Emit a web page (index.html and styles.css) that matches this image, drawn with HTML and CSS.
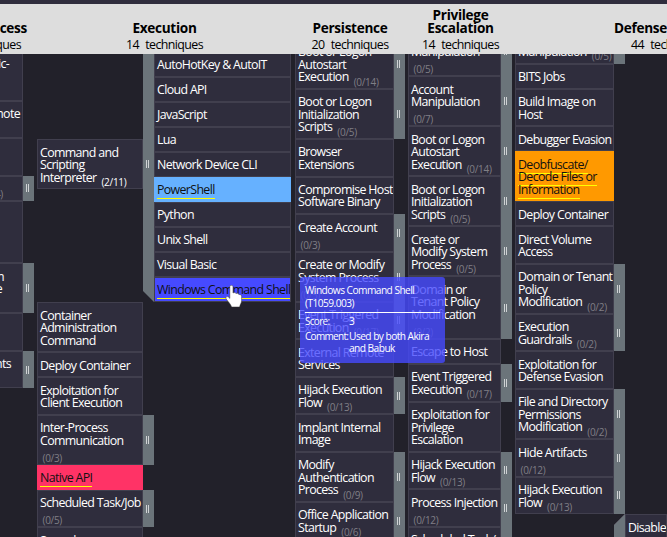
FILE: index.html
```html
<!DOCTYPE html>
<html lang="en">
<head>
<meta charset="utf-8">
<title>Technique matrix</title>
<link rel="stylesheet" href="styles.css">
</head>
<body>
<header class="head">
  <div class="tactic initial"><b>Initial Access</b><span>10&nbsp; techniques</span></div>
  <div class="tactic execution"><b>Execution</b><span>14&nbsp; techniques</span></div>
  <div class="tactic persistence"><b>Persistence</b><span>20&nbsp; techniques</span></div>
  <div class="tactic privilege"><b>Privilege<br>Escalation</b><span>14&nbsp; techniques</span></div>
  <div class="tactic evasion"><b>Defense Evasion</b><span>44&nbsp; techniques</span></div>
</header>
<main class="matrix">
  <section class="col initial">
    <div class="row"><div class="tech n3 c-public">Exploit Public-<br>&nbsp;<br>&nbsp;</div></div>
    <div class="row"><div class="tech n2 c-remote">External Remote<br>&nbsp;</div></div>
    <div class="row"><div class="tech n2">&nbsp;</div></div>
    <div class="row"><div class="tech n1 c-phish">Phishing <i>(0/4)</i></div><div class="bar"></div></div>
    <div class="row"><div class="tech n4">&nbsp;</div></div>
    <div class="row"><div class="tech n3 c-supply"><span>Supply Chain</span><br><span class="short">Compromise</span><br>&nbsp;</div><div class="bar"></div></div>
    <div class="row"><div class="tech n2">&nbsp;</div></div>
    <div class="row"><div class="tech n2 c-valid">Valid Accounts<br>&nbsp;</div><div class="bar"></div></div>
  </section>

  <section class="col execution">
    <div class="row expanded">
      <div class="tech n3 white">Command and<br>Scripting<br>Interpreter <i>(2/11)</i></div>
      <div class="bar open"></div>
      <div class="subs">
        <div class="tech n1">AppleScript</div>
        <div class="tech n1">AutoHotKey &amp; AutoIT</div>
        <div class="tech n1">Cloud API</div>
        <div class="tech n1">JavaScript</div>
        <div class="tech n1">Lua</div>
        <div class="tech n1">Network Device CLI</div>
        <div class="tech n1 sky"><u>PowerShell</u></div>
        <div class="tech n1">Python</div>
        <div class="tech n1">Unix Shell</div>
        <div class="tech n1">Visual Basic</div>
        <div class="tech n1 indigo"><u>Windows Command Shell</u></div>
      </div>
    </div>
    <div class="row"><div class="tech n3">Container<br>Administration<br>Command</div></div>
    <div class="row"><div class="tech n1">Deploy Container</div></div>
    <div class="row"><div class="tech n2">Exploitation for<br>Client Execution</div></div>
    <div class="row"><div class="tech n3">Inter-Process<br>Communication<br><i>(0/3)</i></div><div class="bar"></div></div>
    <div class="row"><div class="tech n1 red"><u>Native API</u></div></div>
    <div class="row"><div class="tech n2">Scheduled Task/Job<br><i>(0/5)</i></div><div class="bar"></div></div>
    <div class="row"><div class="tech n2">Serverless<br>Execution</div></div>
  </section>

  <section class="col persistence">
    <div class="row"><div class="tech n3">Boot or Logon<br>Autostart<br>Execution <i>(0/14)</i></div><div class="bar"></div></div>
    <div class="row"><div class="tech n3">Boot or Logon<br>Initialization<br>Scripts <i>(0/5)</i></div><div class="bar"></div></div>
    <div class="row"><div class="tech n2">Browser<br>Extensions</div></div>
    <div class="row"><div class="tech n2">Compromise Host<br>Software Binary</div></div>
    <div class="row"><div class="tech n2">Create Account<br><i>(0/3)</i></div><div class="bar"></div></div>
    <div class="row"><div class="tech n3">Create or Modify<br>System Process<br><i>(0/5)</i></div><div class="bar"></div></div>
    <div class="row"><div class="tech n2">Event Triggered<br>Execution <i>(0/17)</i></div><div class="bar"></div></div>
    <div class="row"><div class="tech n2">External Remote<br>Services</div></div>
    <div class="row"><div class="tech n2">Hijack Execution<br>Flow <i>(0/13)</i></div><div class="bar"></div></div>
    <div class="row"><div class="tech n2">Implant Internal<br>Image</div></div>
    <div class="row"><div class="tech n3">Modify<br>Authentication<br>Process <i>(0/9)</i></div><div class="bar"></div></div>
    <div class="row"><div class="tech n2">Office Application<br>Startup <i>(0/6)</i></div><div class="bar"></div></div>
  </section>

  <section class="col privilege">
    <div class="row"><div class="tech n3">Access Token<br>Manipulation<br><i>(0/5)</i></div><div class="bar"></div></div>
    <div class="row"><div class="tech n3">Account<br>Manipulation<br><i>(0/7)</i></div><div class="bar"></div></div>
    <div class="row"><div class="tech n3">Boot or Logon<br>Autostart<br>Execution <i>(0/14)</i></div><div class="bar"></div></div>
    <div class="row"><div class="tech n3">Boot or Logon<br>Initialization<br>Scripts <i>(0/5)</i></div><div class="bar"></div></div>
    <div class="row"><div class="tech n3">Create or<br>Modify System<br>Process <i>(0/5)</i></div><div class="bar"></div></div>
    <div class="row"><div class="tech n4">Domain or<br>Tenant Policy<br>Modification<br><i>(0/2)</i></div><div class="bar"></div></div>
    <div class="row"><div class="tech n1">Escape to Host</div></div>
    <div class="row"><div class="tech n2">Event Triggered<br>Execution <i>(0/17)</i></div><div class="bar"></div></div>
    <div class="row"><div class="tech n3">Exploitation for<br>Privilege<br>Escalation</div></div>
    <div class="row"><div class="tech n2">Hijack Execution<br>Flow <i>(0/13)</i></div><div class="bar"></div></div>
    <div class="row"><div class="tech n2">Process Injection<br><i>(0/12)</i></div><div class="bar"></div></div>
    <div class="row"><div class="tech n2">Scheduled Task/<br>Job <i>(0/5)</i></div><div class="bar"></div></div>
  </section>

  <section class="col evasion">
    <div class="row"><div class="tech n2">Access Token<br>Manipulation <i>(0/5)</i></div><div class="bar"></div></div>
    <div class="row"><div class="tech n1">BITS Jobs</div></div>
    <div class="row"><div class="tech n2">Build Image on<br>Host</div></div>
    <div class="row"><div class="tech n1">Debugger Evasion</div></div>
    <div class="row"><div class="tech n3 orange"><u>Deobfuscate/<br>Decode Files or<br>Information</u></div></div>
    <div class="row"><div class="tech n1">Deploy Container</div></div>
    <div class="row"><div class="tech n2">Direct Volume<br>Access</div></div>
    <div class="row"><div class="tech n3">Domain or Tenant<br>Policy<br>Modification <i>(0/2)</i></div><div class="bar"></div></div>
    <div class="row"><div class="tech n2">Execution<br>Guardrails <i>(0/2)</i></div><div class="bar"></div></div>
    <div class="row"><div class="tech n2">Exploitation for<br>Defense Evasion</div></div>
    <div class="row"><div class="tech n3">File and Directory<br>Permissions<br>Modification <i>(0/2)</i></div><div class="bar"></div></div>
    <div class="row"><div class="tech n2">Hide Artifacts<br><i>(0/12)</i></div><div class="bar"></div></div>
    <div class="row"><div class="tech n2">Hijack Execution<br>Flow <i>(0/13)</i></div><div class="bar"></div></div>
    <div class="row expanded">
      <div class="blank"></div>
      <div class="bar top"></div>
      <div class="subs"><div class="tech n1">Disable or Modify</div><div class="tech n1">&nbsp;</div></div>
    </div>
  </section>
</main>

<aside class="tip">
  <p>Windows Command Shell<br>(T1059.003)</p>
  <dl><dt>Score:</dt><dd>3</dd><dt>Comment:</dt><dd>Used by both Akira<br>and Babuk</dd></dl>
</aside>
<svg class="hand" viewBox="0 0 18 23" width="18" height="23"><path d="M4.8 1.8C4.8-.2 8-.2 8 1.8V8C9 7.2 10.800 7.500 11 8.600C12 8 13.600 8.400 13.900 9.600C15.200 9.200 16.600 10 16.600 11.600V15.500C16.600 18 15.200 19 14.600 22H6.600C5.800 19 3.200 17 1.200 14C.2 12.200 1.800 10.800 3.400 12L4.800 13.400Z" fill="#fff" stroke="#333" stroke-width=".5"/></svg>
</body>
</html>
```
FILE: styles.css
```css
:root {
  --u: 12.52px;
  --line: #413f4e;
  --cell: #2f2d3d;
  --bar: #6b747a;
}
*, *::before { box-sizing: border-box; }
body {
  margin: 0;
  width: 667px;
  height: 537px;
  overflow: hidden;
  position: relative;
  background: #22212a;
  font: 12.4px/12.52px "Open Sans", "Noto Sans", sans-serif;
  letter-spacing: -0.65px;
  color: #fff;
  white-space: nowrap;
}
.head {
  height: 54px;
  border-top: 4px solid var(--cell);
  background: #ddd;
  color: #000;
  display: grid;
  grid-template-columns: 34px 257px 114px 107px 155px;
  align-items: end;
  padding-bottom: 2px;
  overflow: hidden;
}
.tactic { display: flex; flex-direction: column; align-items: center; text-align: center; }
.tactic b { font-size: 13.6px; line-height: 13px; letter-spacing: -0.3px; }
.tactic span { line-height: 15px; margin-top: 3px; letter-spacing: -0.6px; word-spacing: .5px; }
.tactic.initial { align-items: flex-end; padding-right: 7px; }
.tactic.initial span { padding-right: 6px; }
.tactic.execution { padding-left: 4px; }
.tactic.persistence { padding-left: 4px; }
.tactic.privilege { padding-left: 4px; }
.tactic.evasion { align-items: flex-start; padding-left: 102px; }
.tactic.evasion span { padding-left: 17px; }

.matrix {
  height: 483px;
  overflow: hidden;
  display: grid;
  grid-template-columns: 34px 257px 114px 107px 155px;
  align-items: start;
}
.row { display: flex; align-items: stretch; }
.tech {
  flex: none;
  border: 1px solid var(--line);
  background: var(--cell);
  padding-left: 2px;
  padding-top: calc(var(--u) * .5 + .2px);
  overflow: hidden;
}
.n1 { height: calc(var(--u) * 2); }
.n2 { height: calc(var(--u) * 3); }
.n3 { height: calc(var(--u) * 4); }
.n4 { height: calc(var(--u) * 5); }
.tech i {
  font-style: normal;
  font-size: 10px;
  letter-spacing: -0.3px;
  line-height: 0;
  vertical-align: -4.5px;
  margin-left: 2.500px;
  color: #807f86;
}
.white i { color: #fff; }
.tech u {
  text-decoration: none;
  border-bottom: 1px solid #ff0;
}
.sky { background: #66b1ff; border-color: #66b1ff; color: #111; }
.indigo { background: #464aff; color: #111; }
.red { background: #ff3366; border-color: #ff3366; color: #111; }
.orange { background: #ff9900; border-color: #ff9900; color: #111; }

.bar {
  width: 11px;
  flex: none;
  background: var(--bar);
  display: flex;
  align-items: center;
}
.bar::before {
  content: "";
  width: 3px;
  height: 8px;
  margin-left: 3px;
  border: solid #d0d3d5;
  border-width: 0 1px;
}
.expanded > .tech { align-self: center; }
.bar.open { clip-path: polygon(0 0, 100% 0, 100% 100%, 0 calc(100% - 11px)); }
.bar.top { background: linear-gradient(135deg, transparent 7.3px, #55545f 7.3px, #55545f 8.3px, var(--bar) 8.3px); }
.bar.top::before { display: none; }

.col.initial .tech { width: 103px; margin-left: -80px; text-align: right; }
.col.initial { margin-top: -3.5px; }
.col.initial .c-public { padding-right: 13px; }
.col.initial .c-remote { padding-right: 2px; }
.col.initial .c-phish { padding-right: 19px; }
.col.initial .c-supply { padding-right: 18px; }
.c-supply .short { padding-right: 2px; }
.col.initial .c-valid { padding-right: 11px; }

.col.execution { margin-top: -27.3px; padding-left: 3px; }
.col.execution .row > .tech { width: 106px; }
.col.execution .subs .tech { width: 137px; }
.col.persistence { margin-top: -15.2px; padding-left: 4px; }
.col.persistence .tech { width: 99px; }
.col.privilege { margin-top: -28px; padding-left: 3px; }
.col.privilege .tech { width: 93px; }
.col.evasion { margin-top: -28px; padding-left: 3px; }
.col.evasion .tech, .blank { width: 99px; flex: none; }
.col.evasion .subs .tech { width: 42px; }

.tip {
  position: absolute;
  left: 300px;
  top: 277px;
  width: 145px;
  height: 86px;
  padding: 7px 5px;
  border-radius: 3px;
  background: rgba(70, 74, 255, .8);
  font-size: 10.2px;
  line-height: 12.5px;
  letter-spacing: -0.55px;
}
.tip p { margin: 0; height: 29px; border-bottom: 1px solid #fff; }
.tip dl { margin: 2px 0 0; display: grid; grid-template-columns: 44px 1fr; row-gap: 2px; }
.tip dt { font-size: 10px; letter-spacing: -0.7px; }
.tip dd { margin: 0; }
.hand { position: absolute; left: 225px; top: 285px; }
```
